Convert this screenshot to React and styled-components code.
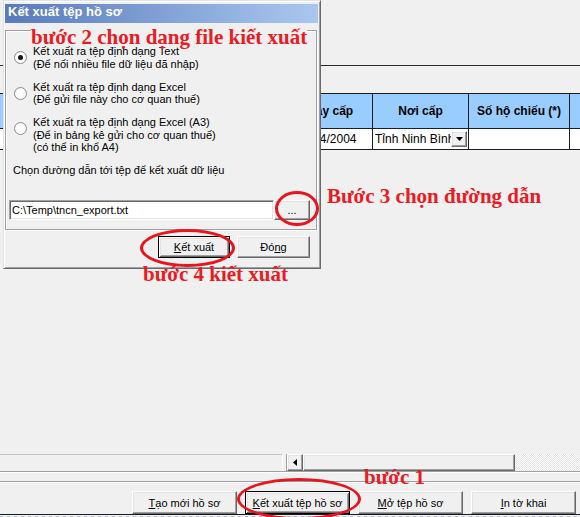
import React from "react";
import styled, { createGlobalStyle, css } from "styled-components";

const Global = createGlobalStyle`
  html, body { margin: 0; padding: 0; background: #f0f0f0; overflow: hidden; }
  body { font-family: "Liberation Sans", Arial, sans-serif; font-size: 11px; color: #000; }
`;

const Screen = styled.div`
  position: relative;
  width: 580px;
  height: 517px;
  overflow: hidden;
  display: flex;
  flex-direction: column;
  background: #f0f0f0;
`;

const TopBand = styled.div`
  flex: none;
  height: 65px;
  border-bottom: 1px solid #2b2b2b;
`;

const Grid = styled.div`
  flex: none;
  margin-top: 27px;
  border-top: 1px solid #1e1e1e;
  display: flex;
  flex-direction: column;
`;

const GridRow = styled.div`
  display: flex;
  height: ${(p) => p.$h}px;
`;

const Cell = styled.div`
  flex: none;
  box-sizing: border-box;
  width: ${(p) => p.$w}px;
  border-right: 1px solid #1e1e1e;
  border-bottom: 1px solid #1e1e1e;
  display: flex;
  align-items: center;
  justify-content: ${(p) => (p.$align === "left" ? "flex-start" : "center")};
  padding-left: ${(p) => (p.$align === "left" ? "2px" : "0")};
  font-size: 12px;
  white-space: nowrap;
  overflow: hidden;
  ${(p) =>
    p.$head
      ? css`
          background: #99ccff;
          font-weight: bold;
        `
      : css`
          background: #fff;
        `}
`;

const CellText = styled.span`
  flex: 1;
  overflow: hidden;
  white-space: nowrap;
`;

const RaisedBox = styled.span`
  flex: none;
  box-sizing: border-box;
  width: ${(p) => p.$w}px;
  height: ${(p) => p.$h}px;
  background: #f0f0f0;
  border: 1px solid;
  border-color: #fff #696969 #696969 #fff;
  box-shadow: inset -1px -1px #a0a0a0, inset 1px 1px #e3e3e3;
  display: flex;
  align-items: center;
  justify-content: center;
  margin-right: ${(p) => p.$mr || 0}px;
`;

const Spacer = styled.div`
  flex: 1;
`;

const ScrollRow = styled.div`
  flex: none;
  height: 17px;
  display: flex;
`;

const LeftPane = styled.div`
  flex: none;
  width: 282px;
  box-sizing: border-box;
  border-top: 1px solid #c4c4c4;
`;

const Splitter = styled.div`
  flex: none;
  width: 5px;
  box-sizing: border-box;
  border-left: 1px solid #fff;
  border-right: 1px solid #a0a0a0;
  background: #f0f0f0;
`;

const Track = styled.div`
  flex: 1;
  background-image: repeating-conic-gradient(#ffffff 0 25%, #e4e4e4 0 50%);
  background-size: 2px 2px;
`;

const HLine = styled.div`
  flex: none;
  height: 1px;
  background: #a0a0a0;
  border-bottom: 1px solid #fff;
  margin-bottom: ${(p) => p.$mb || 0}px;
`;

const ButtonBar = styled.div`
  flex: none;
  display: flex;
  justify-content: flex-end;
  gap: 8px;
  padding-right: 4px;
`;

const WinButton = styled.button`
  box-sizing: border-box;
  width: ${(p) => p.$w}px;
  height: ${(p) => p.$h}px;
  padding: 0;
  background: #f0f0f0;
  font: 11px "Liberation Sans", Arial, sans-serif;
  color: #000;
  border: 1px solid;
  border-color: #fff #696969 #696969 #fff;
  box-shadow: inset -1px -1px #a0a0a0, inset 1px 1px #e3e3e3;
  ${(p) =>
    p.$default &&
    css`
      border-color: #000;
      box-shadow: inset 1px 1px #fff, inset -1px -1px #696969,
        inset 2px 2px #e3e3e3, inset -2px -2px #a0a0a0;
    `}
  u { text-decoration: underline; }
`;

const TaskEdge = styled.div`
  flex: none;
  height: 1px;
  background: #1c1c1c;
  border-bottom: 1px solid transparent;
  box-shadow: 0 1px 0 0 #f0f0f0;
  background-clip: padding-box;
`;

const TaskDots = styled.div`
  flex: none;
  height: 1px;
  background: repeating-linear-gradient(90deg, #a9bfd9 0 3px, #e6edf5 3px 7px);
`;

/* ---------- dialog ---------- */

const Dialog = styled.div`
  position: absolute;
  left: 3px;
  top: 0;
  width: 318px;
  height: 269px;
  box-sizing: border-box;
  background: #f0f0f0;
  border: 1px solid;
  border-color: #e3e3e3 #696969 #696969 #e3e3e3;
  box-shadow: inset 1px 1px #fff, inset -1px -1px #a0a0a0;
  padding: 3px 2px 0 1px;
  display: flex;
  flex-direction: column;
`;

const TitleBar = styled.div`
  flex: none;
  height: 19px;
  line-height: 19px;
  padding-left: 3px;
  background: linear-gradient(to right, #587abb, #a9c8ef);
  color: #fff;
  font: bold 13px "Liberation Sans", Arial, sans-serif;
`;

const GroupBox = styled.div`
  flex: none;
  box-sizing: border-box;
  height: 200px;
  margin: 7px 1px 0 0;
  border: 1px solid #a0a0a0;
  box-shadow: inset 1px 1px #fff, 1px 1px #fff;
  padding: 14px 5px 0 3px;
  display: flex;
  flex-direction: column;
`;

const OptionList = styled.div`
  display: flex;
  flex-direction: column;
  gap: 10.5px;
  margin-left: 5px;
`;

const Option = styled.div`
  display: flex;
  align-items: flex-start;
  gap: 6px;
`;

const Radio = styled.span`
  flex: none;
  box-sizing: border-box;
  width: 13px;
  height: 13px;
  margin-top: 6px;
  border-radius: 50%;
  border: 1px solid #8c8c8c;
  background: radial-gradient(circle at 60% 60%, #ffffff 55%, #e6e6e6 100%);
  display: flex;
  align-items: center;
  justify-content: center;
  &::after {
    content: "";
    width: 5px;
    height: 5px;
    border-radius: 50%;
    background: ${(p) => (p.$on ? "#151515" : "transparent")};
  }
`;

const OptionText = styled.div`
  line-height: 12.5px;
  font-size: 11px;
`;

const FieldLabel = styled.div`
  margin: 10.5px 0 0 4px;
  line-height: 13px;
`;

const PathRow = styled.div`
  display: flex;
  margin-top: 23px;
  height: 20px;
`;

const PathInput = styled.div`
  box-sizing: border-box;
  width: 265px;
  height: 20px;
  background: #fff;
  border: 1px solid;
  border-color: #a0a0a0 #fff #fff #a0a0a0;
  box-shadow: inset 1px 1px #696969, inset -1px -1px #e3e3e3;
  padding-left: 2px;
  line-height: 18px;
  white-space: nowrap;
  overflow: hidden;
`;

const DialogButtons = styled.div`
  display: flex;
  justify-content: flex-end;
  gap: 7px;
  margin-top: 6px;
  padding-right: 8px;
`;

/* ---------- annotations ---------- */

const Note = styled.div`
  position: absolute;
  left: ${(p) => p.$x}px;
  top: ${(p) => p.$y}px;
  font: bold 21px/1 "Liberation Serif", "Times New Roman", serif;
  color: #ec1a23;
  white-space: nowrap;
  ${(p) =>
    p.$mask &&
    css`
      background: linear-gradient(#f0f0f0, #f0f0f0) no-repeat left top / 100% 8px;
    `}
`;

const Ring = styled.div`
  position: absolute;
  left: ${(p) => p.$x}px;
  top: ${(p) => p.$y}px;
  width: ${(p) => p.$w}px;
  height: ${(p) => p.$h}px;
  box-sizing: border-box;
  border: 3px solid #e8151f;
  border-radius: 50%;
`;

const ArrowDown = () => (
  <svg width="7" height="4" viewBox="0 0 7 4">
    <path d="M0 0h7L3.5 4z" fill="#000" />
  </svg>
);

const ArrowLeft = () => (
  <svg width="4" height="7" viewBox="0 0 4 7">
    <path d="M4 0v7L0 3.5z" fill="#000" />
  </svg>
);

const columns = [
  { w: 186, head: "Số CMND", val: "" },
  { w: 95, head: "Mã số thuế", val: "" },
  { w: 92, head: "Ngày cấp", val: "15/04/2004" },
  { w: 96, head: "Nơi cấp", val: "Tỉnh Ninh Bình", combo: true },
  { w: 101, head: "Số hộ chiếu (*)", val: "" },
  { w: 130, head: "Ngày cấp HC", val: "" },
];

export default function App() {
  return (
    <>
      <Global />
      <Screen>
        <TopBand />
        <Grid>
          <GridRow $h={35}>
            {columns.map((c) => (
              <Cell key={c.head} $w={c.w} $head>
                {c.head}
              </Cell>
            ))}
          </GridRow>
          <GridRow $h={21}>
            {columns.map((c) =>
              c.combo ? (
                <Cell key={c.head} $w={c.w} $align="left">
                  <CellText>{c.val}</CellText>
                  <RaisedBox $w={16} $h={16} $mr={1}>
                    <ArrowDown />
                  </RaisedBox>
                </Cell>
              ) : (
                <Cell key={c.head} $w={c.w}>
                  {c.val}
                </Cell>
              )
            )}
          </GridRow>
        </Grid>
        <Spacer />
        <ScrollRow>
          <LeftPane />
          <Splitter />
          <RaisedBox $w={16} $h={17}>
            <ArrowLeft />
          </RaisedBox>
          <RaisedBox $w={212} $h={17} />
          <Track />
        </ScrollRow>
        <HLine $mb={8} />
        <HLine $mb={8} />
        <ButtonBar>
          <WinButton $w={105} $h={23}>
            <u>T</u>ạo mới hồ sơ
          </WinButton>
          <WinButton $w={105} $h={23} $default>
            <u>K</u>ết xuất tệp hồ sơ
          </WinButton>
          <WinButton $w={105} $h={23}>
            <u>M</u>ở tệp hồ sơ
          </WinButton>
          <WinButton $w={105} $h={23}>
            <u>I</u>n tờ khai
          </WinButton>
        </ButtonBar>
        <TaskEdge />
        <TaskDots />

        <Dialog>
          <TitleBar>Kết xuất tệp hồ sơ</TitleBar>
          <GroupBox>
            <OptionList>
              <Option>
                <Radio $on />
                <OptionText>
                  Kết xuất ra tệp định dạng Text
                  <br />
                  (Để nối nhiều file dữ liệu đã nhập)
                </OptionText>
              </Option>
              <Option>
                <Radio />
                <OptionText>
                  Kết xuất ra tệp định dạng Excel
                  <br />
                  (Để gửi file này cho cơ quan thuế)
                </OptionText>
              </Option>
              <Option>
                <Radio />
                <OptionText>
                  Kết xuất ra tệp định dạng Excel (A3)
                  <br />
                  (Để in bảng kê gửi cho cơ quan thuế)
                  <br />
                  (có thể in khổ A4)
                </OptionText>
              </Option>
            </OptionList>
            <FieldLabel>Chọn đường dẫn tới tệp để kết xuất dữ liệu</FieldLabel>
            <PathRow>
              <PathInput>{"C:\\Temp\\tncn_export.txt"}</PathInput>
              <WinButton $w={36} $h={20}>
                ...
              </WinButton>
            </PathRow>
          </GroupBox>
          <DialogButtons>
            <WinButton $w={72} $h={22} $default>
              <u>K</u>ết xuất
            </WinButton>
            <WinButton $w={73} $h={22}>
              Đó<u>n</u>g
            </WinButton>
          </DialogButtons>
        </Dialog>

        <Note $x={31} $y={27} $mask>
          bước 2 chọn dạng file kiết xuất
        </Note>
        <Note $x={327} $y={186}>
          Bước 3 chọn đường dẫn
        </Note>
        <Note $x={143} $y={264}>
          bước 4 kiết xuất
        </Note>
        <Note $x={364} $y={467}>
          bước 1
        </Note>

        <Ring $x={275} $y={191} $w={44} $h={35} />
        <Ring $x={140} $y={229} $w={95} $h={38} />
        <Ring $x={237} $y={478} $w={124} $h={42} />
      </Screen>
    </>
  );
}
